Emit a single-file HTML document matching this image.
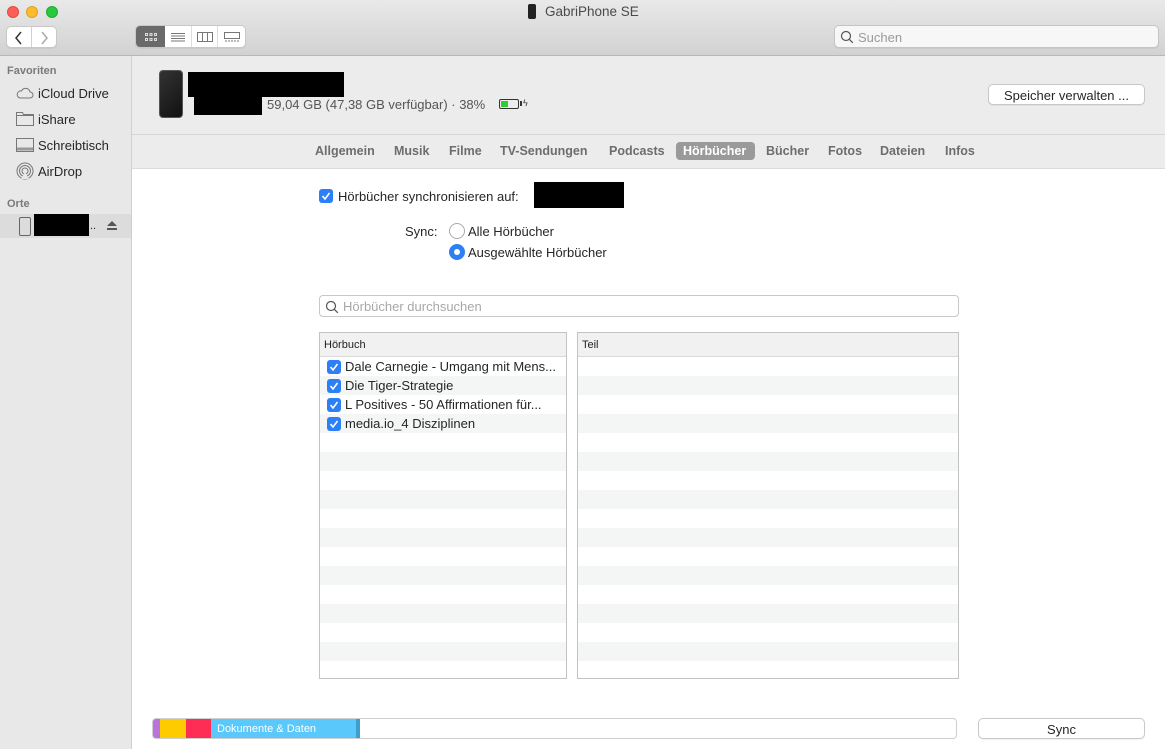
<!DOCTYPE html>
<html><head><meta charset="utf-8"><style>
*{box-sizing:border-box;margin:0;padding:0}
body{width:1165px;height:749px;overflow:hidden;font-family:"Liberation Sans",sans-serif;font-size:13px;color:#262626;background:#fff;position:relative}
.a{position:absolute}
.tb{left:0;top:0;width:1165px;height:56px;background:linear-gradient(#e9e9e9,#d2d2d2);border-bottom:1px solid #b8b8b8}
.dot{width:12px;height:12px;border-radius:50%;top:6px}
.btn{background:#fff;border:1px solid #c8c8c8;border-radius:5px;box-shadow:0 1px 0 rgba(0,0,0,.05)}
.side{left:0;top:56px;width:132px;height:693px;background:#e8e8e8;border-right:1px solid #d0d0d0}
.sh{font-size:11px;color:#7a7a7a;font-weight:bold;left:7px}
.si{left:38px;font-size:13px;color:#262626}
.hdr{left:132px;top:56px;width:1033px;height:79px;background:#ececec;border-bottom:1px solid #d6d6d6}
.tabs{left:132px;top:135px;width:1033px;height:34px;background:#ececec;border-bottom:1px solid #dcdcdc}
.tab{top:144px;font-weight:bold;color:#6d6d6d;font-size:12.5px}
.cb{width:14px;height:14px;border-radius:3px;background:#2d7ff6;display:flex;align-items:center;justify-content:center}
.tbl{border:1px solid #c3c3c3;background:repeating-linear-gradient(#fff 0 19px,#f4f5f5 19px 38px) 0 24px/100% no-repeat;background-color:#fff}
.th{height:24px;background:#f1f1f1;border-bottom:1px solid #d9d9d9;font-size:11px;padding:6px 0 0 4px;color:#222}
.row{height:19px;display:flex;align-items:center;padding-left:7px;gap:4px;white-space:nowrap}
</style></head><body>
<div class="a tb"></div>
<div class="a dot" style="left:7px;background:#fc5f57;border:1px solid #df4a43"></div>
<div class="a dot" style="left:26px;background:#fdbc2e;border:1px solid #dea023"></div>
<div class="a dot" style="left:46px;background:#28c840;border:1px solid #1fac2e"></div>
<div class="a" style="left:528px;top:4px;width:8px;height:15px;background:#222;border-radius:2px"></div>
<div class="a" style="left:545px;top:4px;font-size:13.5px;color:#4a4a4a">GabriPhone SE</div>
<div class="a btn" style="left:6px;top:26px;width:51px;height:22px;display:flex">
 <div style="width:25px;border-right:1px solid #d0d0d0;text-align:center"><svg width="10" height="14" viewBox="0 0 10 14" style="margin-top:4px"><path d="M7 1L2 7l5 6" fill="none" stroke="#333" stroke-width="1.5"/></svg></div>
 <div style="width:25px;text-align:center"><svg width="10" height="14" viewBox="0 0 10 14" style="margin-top:4px"><path d="M3 1l5 6-5 6" fill="none" stroke="#aaa" stroke-width="1.5"/></svg></div>
</div>
<div class="a btn" style="left:135px;top:25px;width:111px;height:23px;display:flex;overflow:hidden">
 <div style="width:30px;background:#6a6a6a;display:flex;align-items:center;justify-content:center"><svg width="14" height="10"><g fill="none" stroke="#ddd"><rect x="1.5" y="1.5" width="2" height="2"/><rect x="6" y="1.5" width="2" height="2"/><rect x="10.5" y="1.5" width="2" height="2"/><rect x="1.5" y="6.5" width="2" height="2"/><rect x="6" y="6.5" width="2" height="2"/><rect x="10.5" y="6.5" width="2" height="2"/></g></svg></div>
 <div style="width:27px;border-right:1px solid #ddd;display:flex;align-items:center;justify-content:center"><svg width="14" height="10"><path d="M0 1.5h14M0 4h14M0 6.5h14M0 9h14" stroke="#777"/></svg></div>
 <div style="width:27px;border-right:1px solid #ddd;display:flex;align-items:center;justify-content:center"><svg width="16" height="10"><rect x=".5" y=".5" width="15" height="9" fill="none" stroke="#777"/><path d="M5.5 0v10M10.5 0v10" stroke="#777"/></svg></div>
 <div style="width:27px;display:flex;align-items:center;justify-content:center"><svg width="16" height="10"><rect x=".5" y=".5" width="15" height="6" fill="none" stroke="#777"/><path d="M1 9h14" stroke="#777" stroke-dasharray="2 1"/></svg></div>
</div>
<div class="a btn" style="left:834px;top:25px;width:325px;height:23px;border-color:#c4c4c4;background:#f7f7f7"><svg class="a" style="left:5px;top:4px" width="14" height="14"><circle cx="6" cy="6" r="4.5" fill="none" stroke="#555" stroke-width="1.2"/><path d="M9.3 9.3l3.5 3.5" stroke="#555" stroke-width="1.3"/></svg><span class="a" style="left:23px;top:4px;color:#9a9a9a">Suchen</span></div>

<div class="a side"></div>
<div class="a sh" style="top:65px">Favoriten</div>
<svg class="a" style="left:16px;top:86px" width="18" height="13"><path d="M4 12h10a3 3 0 0 0 0-6 4.5 4.5 0 0 0-8.5-1A3.5 3.5 0 0 0 4 12z" fill="none" stroke="#777"/></svg>
<div class="a si" style="top:86px">iCloud Drive</div>
<svg class="a" style="left:16px;top:112px" width="18" height="14"><path d="M.5 13.5V.5h6l1 2h10v11z M.5 3.5h17" fill="none" stroke="#777"/></svg>
<div class="a si" style="top:112px">iShare</div>
<svg class="a" style="left:16px;top:138px" width="18" height="14"><rect x=".5" y=".5" width="17" height="13" fill="none" stroke="#777"/><path d="M1 11h16" stroke="#999" stroke-width="3"/></svg>
<div class="a si" style="top:138px">Schreibtisch</div>
<svg class="a" style="left:16px;top:162px" width="18" height="18"><g fill="none" stroke="#777"><circle cx="9" cy="9" r="8"/><circle cx="9" cy="9" r="5.5"/><circle cx="9" cy="9" r="3"/></g><path d="M5 17l4-7 4 7z" fill="#e8e8e8"/></svg>
<div class="a si" style="top:164px">AirDrop</div>
<div class="a sh" style="top:198px">Orte</div>
<div class="a" style="left:0;top:214px;width:131px;height:24px;background:#dcdcdc"></div>
<div class="a" style="left:19px;top:217px;width:12px;height:19px;border:1px solid #666;border-radius:2px"></div>
<div class="a" style="left:34px;top:214px;width:55px;height:22px;background:#000"></div>
<div class="a" style="left:90px;top:220px;font-size:11px">..</div>
<svg class="a" style="left:107px;top:221px" width="10" height="9"><path d="M5 0l5 5H0z M0 7h10v2H0z" fill="#555"/></svg>

<div class="a hdr"></div>
<div class="a" style="left:159px;top:70px;width:24px;height:48px;background:linear-gradient(135deg,#333,#111);border-radius:4px;border:1px solid #555"></div>
<div class="a" style="left:188px;top:72px;width:156px;height:25px;background:#000"></div>
<div class="a" style="left:194px;top:97px;width:68px;height:18px;background:#000"></div>
<div class="a" style="left:267px;top:97px;color:#555">59,04 GB (47,38 GB verfügbar) · 38%</div>
<div class="a" style="left:499px;top:99px;width:20px;height:10px;border:1px solid #333;border-radius:2px"><div style="width:7px;height:6px;background:#2ecc2e;margin:1px"></div></div>
<div class="a" style="left:520px;top:101px;width:2px;height:5px;background:#333"></div>
<div class="a" style="left:523px;top:98px;font-size:9px;color:#333">ϟ</div>
<div class="a btn" style="left:988px;top:84px;width:157px;height:21px;text-align:center;padding-top:3px">Speicher verwalten ...</div>

<div class="a tabs"></div>
<div class="a tab" style="left:315px">Allgemein</div>
<div class="a tab" style="left:394px">Musik</div>
<div class="a tab" style="left:449px">Filme</div>
<div class="a tab" style="left:500px">TV-Sendungen</div>
<div class="a tab" style="left:609px">Podcasts</div>
<div class="a" style="left:676px;top:142px;width:79px;height:18px;background:#9a9a9a;border-radius:4px"></div>
<div class="a tab" style="left:683px;color:#fff">Hörbücher</div>
<div class="a tab" style="left:766px">Bücher</div>
<div class="a tab" style="left:828px">Fotos</div>
<div class="a tab" style="left:880px">Dateien</div>
<div class="a tab" style="left:945px">Infos</div>

<div class="a cb" style="left:319px;top:189px"><svg width="10" height="10"><path d="M1.5 5l2.5 3 4.5-6" fill="none" stroke="#fff" stroke-width="1.6"/></svg></div>
<div class="a" style="left:338px;top:189px">Hörbücher synchronisieren auf: </div>
<div class="a" style="left:534px;top:182px;width:90px;height:26px;background:#000"></div>
<div class="a" style="left:405px;top:224px">Sync:</div>
<div class="a" style="left:449px;top:223px;width:16px;height:16px;border-radius:50%;border:1px solid #aaa;background:#fff"></div>
<div class="a" style="left:468px;top:224px">Alle Hörbücher</div>
<div class="a" style="left:449px;top:244px;width:16px;height:16px;border-radius:50%;background:#2d7ff6"><div style="width:6px;height:6px;border-radius:50%;background:#fff;margin:5px"></div></div>
<div class="a" style="left:468px;top:245px">Ausgewählte Hörbücher</div>

<div class="a" style="left:319px;top:295px;width:640px;height:22px;border:1px solid #c8c8c8;border-radius:4px;background:#fff"><svg class="a" style="left:5px;top:4px" width="14" height="14"><circle cx="6" cy="6" r="4.5" fill="none" stroke="#555" stroke-width="1.2"/><path d="M9.3 9.3l3.5 3.5" stroke="#555" stroke-width="1.3"/></svg><span class="a" style="left:23px;top:3px;color:#a8a8a8">Hörbücher durchsuchen</span></div>

<div class="a tbl" style="left:319px;top:332px;width:248px;height:347px">
 <div class="th">Hörbuch</div>
 <div class="row"><div class="cb"><svg width="10" height="10"><path d="M1.5 5l2.5 3 4.5-6" fill="none" stroke="#fff" stroke-width="1.6"/></svg></div>Dale Carnegie - Umgang mit Mens...</div>
 <div class="row"><div class="cb"><svg width="10" height="10"><path d="M1.5 5l2.5 3 4.5-6" fill="none" stroke="#fff" stroke-width="1.6"/></svg></div>Die Tiger-Strategie</div>
 <div class="row"><div class="cb"><svg width="10" height="10"><path d="M1.5 5l2.5 3 4.5-6" fill="none" stroke="#fff" stroke-width="1.6"/></svg></div>L Positives - 50 Affirmationen für...</div>
 <div class="row"><div class="cb"><svg width="10" height="10"><path d="M1.5 5l2.5 3 4.5-6" fill="none" stroke="#fff" stroke-width="1.6"/></svg></div>media.io_4 Disziplinen</div>
</div>
<div class="a tbl" style="left:577px;top:332px;width:382px;height:347px"><div class="th">Teil</div></div>

<div class="a" style="left:152px;top:718px;width:805px;height:21px;border:1px solid #cfcfcf;border-radius:4px;background:#fff;overflow:hidden;display:flex">
 <div style="width:7px;background:#b874dc"></div>
 <div style="width:26px;background:#fecb00"></div>
 <div style="width:25px;background:#fe2d55"></div>
 <div style="width:145px;background:#5ac8fa;color:#fff;font-size:11px;padding:4px 0 0 6px">Dokumente &amp; Daten</div>
 <div style="width:4px;background:#3f9ed0"></div>
</div>
<div class="a btn" style="left:978px;top:718px;width:167px;height:21px;text-align:center;padding-top:3px">Sync</div>
</body></html>
